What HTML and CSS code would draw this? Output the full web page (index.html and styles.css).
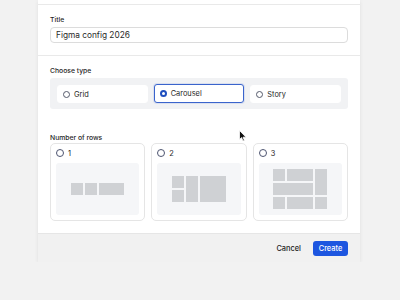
FILE: index.html
```html
<!DOCTYPE html>
<html>
<head>
    <meta name="viewport" content="width=device-width, initial-scale=1">
    <link rel="stylesheet" href="styles.css">
</head>
<body>
    <div class="modal">
        <div class="section top"></div>
        <div class="section">
            <div class="label">Title</div>
            <div class="input">Figma config 2026</div>
        </div>
        <div class="section last">
            <div class="label">Choose type</div>
            <div class="types">
                <div class="type"><span class="radio"></span>Grid</div>
                <div class="type selected"><span class="radio"></span>Carousel</div>
                <div class="type"><span class="radio"></span>Story</div>
            </div>

            <div class="label rows-label">Number of rows</div>
            <div class="cards">
                <div class="card">
                    <div class="card-head"><span class="radio"></span>1</div>
                    <div class="preview">
                        <div class="pattern p1">
                            <span></span><span></span><span></span>
                        </div>
                    </div>
                </div>
                <div class="card">
                    <div class="card-head"><span class="radio"></span>2</div>
                    <div class="preview">
                        <div class="pattern p2">
                            <span></span><span class="tall"></span><span class="big"></span><span></span>
                        </div>
                    </div>
                </div>
                <div class="card">
                    <div class="card-head"><span class="radio"></span>3</div>
                    <div class="preview">
                        <div class="pattern p3">
                            <span></span><span></span><span class="tall"></span>
                            <span class="wide"></span>
                            <span></span><span></span><span></span>
                        </div>
                    </div>
                </div>
            </div>
        </div>
        <div class="footer">
            <button class="cancel">Cancel</button>
            <button class="create">Create</button>
        </div>
    </div>

    <!-- mouse pointer -->
    <svg class="cursor" width="8" height="12" viewBox="0 0 8 12">
        <path d="M0.5 0.5 L0.5 9.5 L2.6 7.6 L4 11 L5.4 10.4 L4 7.2 L7 7.2 Z" fill="#111" stroke="#fff" stroke-width="0.8"/>
    </svg>
</body>
</html>
```

FILE: styles.css
```css
body {
    margin: 0;
    background-color: #f2f2f2;
    font-family: Inter, "Noto Sans", sans-serif;
    color: #1f1f1f;
}

.modal {
    width: 322px;
    margin-left: 38px;
    background-color: #fff;
    box-shadow: 0 1px 4px rgba(0, 0, 0, 0.08);
}

.section {
    padding: 9px 12px 12px;
    border-bottom: 1px solid #e9e9e9;
}

.section.top {
    height: 4px;
    padding: 0;
}

.section.last {
    border-bottom: none;
}

.label {
    font-size: 6.8px;
    font-weight: 500;
    line-height: 12px;
    margin-bottom: 1px;
}

.input {
    height: 14px;
    line-height: 14px;
    border: 1px solid #dcdcdc;
    border-radius: 4px;
    padding: 0 5px;
    font-size: 8.3px;
    color: #2a2a2a;
}

.types {
    display: flex;
    gap: 6px;
    padding: 7px 7px 6px;
    background-color: #f1f2f4;
    border-radius: 3px;
}

.type {
    flex: 1;
    display: flex;
    align-items: center;
    height: 16px;
    padding: 0 5px;
    background-color: #fff;
    border: 1px solid #fff;
    border-radius: 3px;
    font-size: 7.4px;
}

.type.selected {
    border: 1.5px solid #3a64cc;
    margin: -1px 0;
    height: 17px;
    box-shadow: 0 0 0 1px rgba(58, 100, 204, 0.12);
}

.radio {
    width: 5px;
    height: 5px;
    border: 1.1px solid #555a6b;
    border-radius: 50%;
    margin-right: 4px;
    flex-shrink: 0;
}

.selected .radio {
    width: 3px;
    height: 3px;
    border: 2.5px solid #1f4fbf;
    background-color: #fff;
}

.rows-label {
    margin-top: 23px;
    margin-bottom: -1px;
}

.cards {
    display: flex;
    gap: 6px;
}

.card {
    flex: 1;
    border: 1px solid #e5e5e5;
    border-radius: 5px;
    padding: 4px 5px 5px;
}

.card-head {
    display: flex;
    align-items: center;
    height: 10px;
    font-size: 7.4px;
    margin-bottom: 5px;
}

.card-head .radio {
    width: 6px;
    height: 6px;
    border-color: #4d5470;
}

.preview {
    height: 52px;
    background-color: #f5f6f8;
    border-radius: 3px;
    display: flex;
    align-items: center;
    justify-content: center;
}

.pattern {
    display: grid;
    gap: 2px;
}

.pattern span {
    background-color: #cfd1d4;
}

.p1 {
    grid-template-columns: 12px 12px 25px;
    grid-template-rows: 12px;
}

.p2 {
    grid-template-columns: 12px 12px 26px;
    grid-template-rows: 12px 12px;
}

.p2 .tall {
    grid-row: span 2;
}

.p2 .big {
    grid-row: span 2;
}

.p3 {
    grid-template-columns: 12px 26px 12px;
    grid-template-rows: 12px 12px 12px;
}

.p3 .tall {
    grid-row: span 2;
}

.p3 .wide {
    grid-column: span 2;
}

.footer {
    display: flex;
    justify-content: flex-end;
    align-items: center;
    gap: 12px;
    height: 28px;
    padding: 0 12px;
    background-color: #f1f1f1;
    border-top: 1px solid #e6e6e6;
}

button {
    font-family: Inter, "Noto Sans", sans-serif;
    font-size: 7.4px;
    font-weight: 500;
    border: none;
}

.cancel {
    background: none;
    color: #222;
    padding: 0;
}

.create {
    background-color: #1d56e0;
    color: #fff;
    height: 15px;
    width: 35px;
    border-radius: 3px;
    padding: 0;
}

.cursor {
    position: absolute;
    left: 239px;
    top: 130px;
}
```
